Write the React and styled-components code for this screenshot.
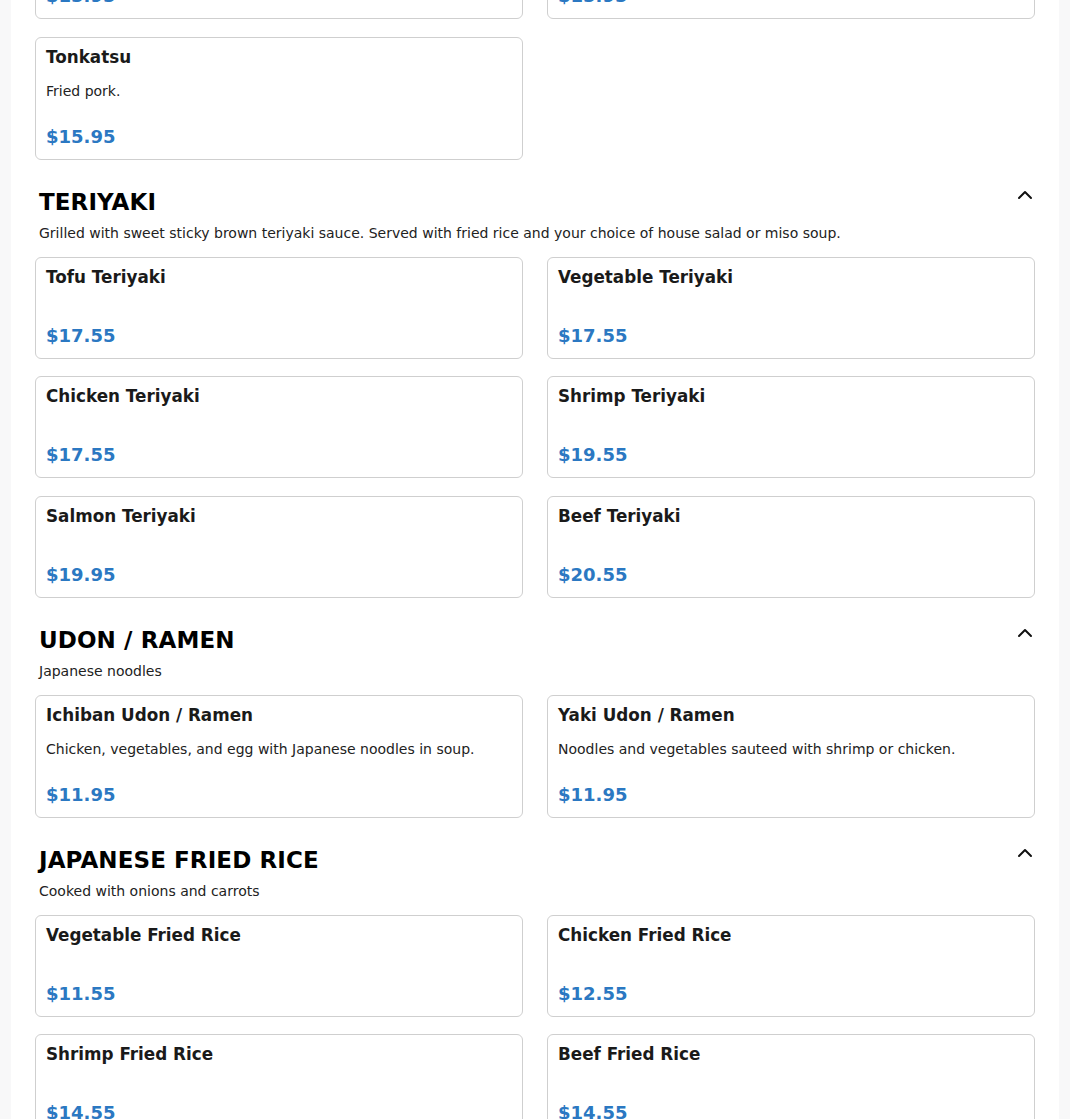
import React, { useState } from 'react'
import styled, { createGlobalStyle } from 'styled-components'
import { ChevronUp } from 'lucide-react'

const GlobalStyle = createGlobalStyle`
  html, body {
    margin: 0;
    padding: 0;
    background: #f8f8f9;
    font-family: "DejaVu Sans", "Liberation Sans", sans-serif;
    color: #1a1a1a;
  }
`

const Page = styled.div`
  padding: 0 11px;
  overflow: hidden;
`

const Panel = styled.main`
  background: #ffffff;
  margin-top: -83px;
  padding: 0 24px 40px;
`

const Section = styled.section`
  & + & {
    margin-top: 28px;
  }
`

const SectionHeader = styled.div`
  align-items: flex-start;
  display: flex;
  justify-content: space-between;
  padding-left: 4px;
`

const SectionTitle = styled.h2`
  color: #000;
  font-size: 23px;
  font-weight: bold;
  letter-spacing: 0.1px;
  line-height: 28px;
  margin: 0;
`

const ToggleButton = styled.button`
  background: none;
  border: none;
  color: #111;
  cursor: pointer;
  display: flex;
  margin: -5px -2px 0 0;
  padding: 0;
`

const SectionDescription = styled.p`
  color: #222;
  font-size: 14px;
  line-height: 17px;
  margin: 9px 0 15px;
  padding-left: 4px;
`

const Grid = styled.div`
  display: grid;
  gap: 17.5px 24px;
  grid-template-columns: 1fr 1fr;
`

const Card = styled.div`
  background: #fff;
  border: 1px solid #cfcfcf;
  border-radius: 6px;
  display: flex;
  flex-direction: column;
  padding: 8px 10px 11px;
`

const ItemName = styled.h3`
  color: #1a1a1a;
  font-size: 16.8px;
  font-weight: bold;
  line-height: 22px;
  margin: 0 0 13px;
`

const ItemDescription = styled.p`
  color: #222;
  font-size: 14px;
  line-height: 21px;
  margin: 0;
`

const Price = styled.div`
  color: #2b78c2;
  font-size: 18px;
  font-weight: bold;
  line-height: 22px;
  margin-top: 24px;
`

const sections = [
  {
    id: 'katsu',
    items: [
      { name: 'Chicken Katsu', price: '$15.95' },
      { name: 'Pork Katsu', price: '$15.95' },
      { name: 'Tonkatsu', description: 'Fried pork.', price: '$15.95' },
    ],
  },
  {
    id: 'teriyaki',
    title: 'TERIYAKI',
    description:
      'Grilled with sweet sticky brown teriyaki sauce. Served with fried rice and your choice of house salad or miso soup.',
    items: [
      { name: 'Tofu Teriyaki', price: '$17.55' },
      { name: 'Vegetable Teriyaki', price: '$17.55' },
      { name: 'Chicken Teriyaki', price: '$17.55' },
      { name: 'Shrimp Teriyaki', price: '$19.55' },
      { name: 'Salmon Teriyaki', price: '$19.95' },
      { name: 'Beef Teriyaki', price: '$20.55' },
    ],
  },
  {
    id: 'udon',
    title: 'UDON / RAMEN',
    description: 'Japanese noodles',
    items: [
      {
        name: 'Ichiban Udon / Ramen',
        description: 'Chicken, vegetables, and egg with Japanese noodles in soup.',
        price: '$11.95',
      },
      {
        name: 'Yaki Udon / Ramen',
        description: 'Noodles and vegetables sauteed with shrimp or chicken.',
        price: '$11.95',
      },
    ],
  },
  {
    id: 'fried-rice',
    title: 'JAPANESE FRIED RICE',
    description: 'Cooked with onions and carrots',
    items: [
      { name: 'Vegetable Fried Rice', price: '$11.55' },
      { name: 'Chicken Fried Rice', price: '$12.55' },
      { name: 'Shrimp Fried Rice', price: '$14.55' },
      { name: 'Beef Fried Rice', price: '$14.55' },
    ],
  },
]

const MenuItemCard = ({ item }) => (
  <Card>
    <ItemName>{item.name}</ItemName>
    <ItemDescription>{item.description}</ItemDescription>
    <Price>{item.price}</Price>
  </Card>
)

const MenuSection = ({ section }) => {
  const [open, setOpen] = useState(true)

  return (
    <Section>
      {section.title && (
        <>
          <SectionHeader>
            <SectionTitle>{section.title}</SectionTitle>
            <ToggleButton onClick={() => setOpen(!open)}>
              <ChevronUp size={24} strokeWidth={2} />
            </ToggleButton>
          </SectionHeader>
          <SectionDescription>{section.description}</SectionDescription>
        </>
      )}
      {open && (
        <Grid>
          {section.items.map(item => (
            <MenuItemCard item={item} key={item.name} />
          ))}
        </Grid>
      )}
    </Section>
  )
}

const App = () => (
  <>
    <GlobalStyle />
    <Page>
      <Panel>
        {sections.map(section => (
          <MenuSection key={section.id} section={section} />
        ))}
      </Panel>
    </Page>
  </>
)

export default App
